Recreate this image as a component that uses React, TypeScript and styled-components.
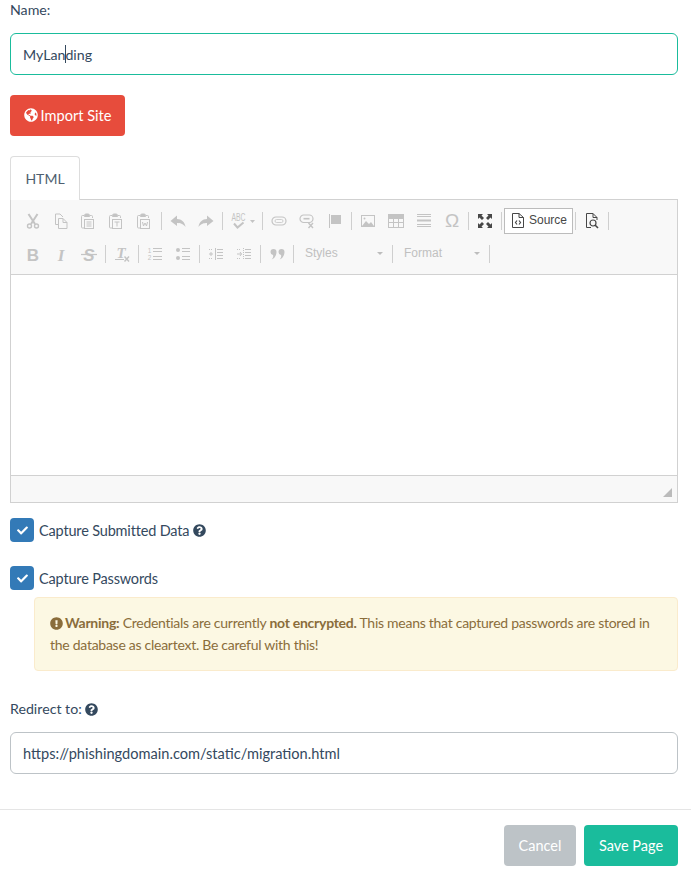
import React from "react";
import styled, { createGlobalStyle } from "styled-components";
import { FaCheck, FaExclamationCircle, FaGlobeAmericas, FaQuestionCircle } from "react-icons/fa";

const Global = createGlobalStyle`
  html, body { margin: 0; padding: 0; background: #fff; }
  body { font-family: Lato, "Open Sans", "Liberation Sans", sans-serif; color: #34495e; }
  * { box-sizing: border-box; }
`;
const Page = styled.div`width: 691px; height: 874px; overflow: hidden; display: flex; flex-direction: column;`;
const Body = styled.div`padding: 0 13px 0 10px; display: flex; flex-direction: column;`;
const Label = styled.div<{ $top?: number }>`
  margin-top: ${(p) => p.$top ?? 0}px; font-size: 14.2px; line-height: 18px; height: 18px; padding-top: 2px; color: #34495e;
  display: flex; align-items: center; gap: 3px;
`;
const Field = styled.div<{ $focus?: boolean; $size: number }>`
  height: 42px; margin-top: 15px; border: 1px solid ${(p) => (p.$focus ? "#1abc9c" : "#bdc3c7")};
  border-radius: 6px; padding: 0 12px; display: flex; align-items: center; font-size: ${(p) => p.$size}px; color: #34495e;
`;
const Caret = styled.span`display: inline-block; width: 1px; height: 18px; background: #34495e; margin: 0 -0.5px;`;
const ImportButton = styled.div`
  margin-top: 20px; width: 115px; height: 41px; border-radius: 4px; background: #e74c3c; color: #fff;
  display: flex; align-items: center; justify-content: center; gap: 3px; font-size: 14.6px; padding-bottom: 1px;
`;
const Tab = styled.div`
  margin-top: 20px; width: 70px; height: 44px; border: 1px solid #ddd; border-bottom: 0; border-radius: 4px 4px 0 0;
  display: flex; align-items: center; justify-content: center; font-size: 14px; color: #4f5f70; background: #fff;
  position: relative; z-index: 1; margin-bottom: -1px;
`;
const Editor = styled.div`border: 1px solid #d1d1d1; height: 304px; display: flex; flex-direction: column;`;
const Toolbar = styled.div`height: 75px; padding: 4px 0 0 8px; background: #f8f8f8; border-bottom: 1px solid #d1d1d1;`;
const ToolRow = styled.div`height: 33px; display: flex; align-items: center;`;
const Slot = styled.span<{ $w?: number; $dark?: boolean }>`
  width: ${(p) => p.$w ?? 28}px; height: 26px; flex: none; display: flex; align-items: center; justify-content: center;
  color: ${(p) => (p.$dark ? "#474747" : "#c4c4c4")};
`;
const Sep = styled.span`width: 1px; height: 18px; margin: 0 2px; flex: none; background: #cfcfcf;`;
const SourceButton = styled.span`
  width: 69px; height: 26px; flex: none; display: flex; align-items: center; gap: 5px; padding: 0 0 1px 7px;
  border: 1px solid #bcbcbc; background: #fff; color: #474747; font: 12px "Liberation Sans", Arial, sans-serif;
`;
const Combo = styled.span<{ $w: number }>`
  width: ${(p) => p.$w}px; height: 26px; flex: none; display: flex; align-items: center; justify-content: space-between;
  padding: 0 7px 2px 9px; color: #c0c0c0; font: 12px "Liberation Sans", Arial, sans-serif;
`;
const ComboArrow = styled.span`width: 0; height: 0; border: 3px solid transparent; border-top-color: #bdbdbd; border-bottom: 0; margin-top: 2px;`;
const Content = styled.div`height: 201px; flex: none; background: #fff; border-bottom: 1px solid #d1d1d1;`;
const EditorFoot = styled.div`flex: 1; background: #f8f8f8; position: relative;`;
const Resizer = styled.svg`position: absolute; right: 4px; bottom: 4px;`;
const CheckRow = styled.div<{ $top: number }>`
  margin-top: ${(p) => p.$top}px; display: flex; align-items: center; gap: 5px; height: 24px; font-size: 14.5px;
  letter-spacing: -0.17px;
`;
const Box = styled.span`width: 24px; height: 24px; border-radius: 4px; background: #337ab7; color: #fff; display: flex; align-items: center; justify-content: center;`;
const Help = styled.span`display: inline-flex; margin-left: -1px;`;
const Alert = styled.div`
  margin: 7px 0 0 24px; height: 74px; padding: 14px 15px; border: 1px solid #faebcc; border-radius: 4px;
  background: #fcf8e3; color: #8a6d3b; font-size: 14px; line-height: 22px; letter-spacing: -0.27px;
`;
const AlertIcon = styled.span`display: inline-flex; vertical-align: -2px; margin-right: 2px;`;
const Divider = styled.div`height: 1px; background: #e5e5e5; margin-top: 35px;`;
const Footer = styled.div`padding: 15px 13px 0 0; display: flex; justify-content: flex-end; gap: 8px;`;
const FootBtn = styled.div<{ $w: number; $bg: string }>`
  width: ${(p) => p.$w}px; height: 41px; border-radius: 4px; background: ${(p) => p.$bg}; color: #fff;
  display: flex; align-items: center; justify-content: center; font-size: 14.5px;
`;
const IconSvg = styled.svg`overflow: visible; flex: none;`;

const I = ({ children, w = 16 }: { children: React.ReactNode; w?: number }) => (
  <IconSvg width={w} height={16} viewBox={`0 0 ${w} 16`} fill="none" stroke="currentColor" strokeWidth={1}>{children}</IconSvg>
);
const ClipBase = () => (
  <>
    <path d="M3 2.5H1.5Q.5 2.5.5 3.5V14Q.5 15 1.5 15H3M11.5 5V3.5Q11.5 2.5 10.5 2.5H9" />
    <path d="M3.5 2.5Q3.5 1 5 1H7Q8.5 1 8.5 2.5V3.5H3.5Z" fill="currentColor" />
    <rect x="3.5" y="6.5" width="9" height="9" />
  </>
);
const T = (p: { x: number; y: number; size: number; text: string; family?: string; weight?: number; italic?: boolean; fit?: number }) => (
  <text x={p.x} y={p.y} fontSize={p.size} fontFamily={p.family ?? "Liberation Sans"} fontWeight={p.weight ?? 400}
    fontStyle={p.italic ? "italic" : "normal"} fill="currentColor" stroke="none" textAnchor="middle"
    textLength={p.fit} lengthAdjust={p.fit ? "spacingAndGlyphs" : undefined}>{p.text}</text>
);
const Comma = ({ dx }: { dx: number }) => (
  <path transform={`translate(${dx} 2)`} d="M.5 4A3 3 0 0 1 6.500 4C6.500 7.500 4.500 10.500 1.500 11.500C3 10 3.500 8.500 3 7A3 3 0 0 1 .5 4Z" fill="currentColor" stroke="none" />
);
const icons = {
  cut: <I><path d="M3.5 1L10 11M12.5 1L6 11" strokeWidth={2} /><circle cx="4.5" cy="13" r="2" strokeWidth={1.4} /><circle cx="11.5" cy="13" r="2" strokeWidth={1.4} /></I>,
  copy: <I><path d="M5.5 11.5H2.500V1H7L10 4" /><path d="M5.5 5.500H10L14 9.500V15.500H5.500Z" /><path d="M10 5.500V9.500H14" /></I>,
  paste: <I><ClipBase /><path d="M5.500 9H10.500M5.500 11H10.500M5.500 13H10.500" /></I>,
  pasteText: <I><ClipBase /><path d="M5.500 9H10.500M8 9V13.500" /></I>,
  pasteWord: <I><ClipBase /><path d="M5.500 9L6.500 13L8 10L9.500 13L10.500 9" /></I>,
  undo: <I><path d="M7 2.500L.5 8L7 13V10C10 10 13 10.500 15.500 14C15 9 11.500 6 7 6Z" fill="currentColor" stroke="none" /></I>,
  redo: <I><path d="M9 2.500L15.500 8L9 13V10C6 10 3 10.500 .5 14C1 9 4.500 6 9 6Z" fill="currentColor" stroke="none" /></I>,
  spell: <I w={24}><T x={7.500} y={8} size={10} text="ABC" fit={14} /><path d="M3 10.500L6.500 14.500L12.500 9.500" strokeWidth={2} /><path d="M19 7H24L21.500 10Z" fill="currentColor" stroke="none" /></I>,
  link: <I><rect x="1" y="4" width="14" height="8" rx="4" strokeWidth={1.2} /><rect x="4" y="6.500" width="8" height="3" rx="1.500" strokeWidth={.8} /></I>,
  unlink: <I><rect x="1" y="2" width="13" height="7.500" rx="3.700" strokeWidth={1.2} /><path d="M4.500 5.700H10.500" strokeWidth={1.600} /><path d="M9.500 10L14 15M14 10L9.500 15" strokeWidth={1.4} /></I>,
  anchor: <I><path d="M2.500 1V15" /><path d="M4 2H14V11H4Z" fill="currentColor" stroke="none" /></I>,
  image: <I><rect x="1.500" y="2.500" width="13" height="11" /><path d="M2 13L6 8L9 11L11 9L14 13Z" fill="currentColor" stroke="none" /><circle cx="4.500" cy="5.500" r="1" fill="currentColor" stroke="none" /></I>,
  table: <I><rect x=".5" y="1.500" width="15" height="13" /><path d="M0 4H16" strokeWidth={4} /><path d="M.5 9.500H15.500M5.500 5V14.500M10.500 5V14.500" /></I>,
  hr: <I><path d="M1 1.500H15M1 3.500H15M1 11.500H15M1 13.500H15" /><path d="M1 7.500H15" strokeWidth={2} /></I>,
  omega: <I><T x={8} y={14} size={19} text="Ω" /></I>,
  maximize: <I><path d="M1 1H6L4.500 2.500L7 5L5 7L2.500 4.500L1 6ZM15 1H10L11.500 2.500L9 5L11 7L13.500 4.500L15 6ZM1 15H6L4.500 13.500L7 11L5 9L2.500 11.500L1 10ZM15 15H10L11.500 13.500L9 11L11 9L13.500 11.500L15 10Z" fill="currentColor" stroke="none" /></I>,
  source: <I w={12}><path d="M.5 1.500H7L11.500 5.500V15.500H.5Z" /><path d="M7 1.500V5.500H11.500" /><path d="M5 8.500L3.500 10.500L5 12.500M7 8.500L8.500 10.500L7 12.500" strokeWidth={1.2} /></I>,
  preview: <I w={12}><path d="M5 14.500H.5V.5H7L11 4.500V7" /><path d="M7 .5V4.500H11" /><circle cx="7" cy="10" r="3" strokeWidth={1.2} /><path d="M9 12L12 15" strokeWidth={1.6} /></I>,
  bold: <I><T x={8} y={14.500} size={17} text="B" weight={700} /></I>,
  italic: <I><T x={8} y={14.500} size={17} text="I" family="Liberation Serif" weight={700} italic /></I>,
  strike: <I><T x={8} y={14.500} size={17} text="S" weight={700} italic /><path d="M0 8.500H16" strokeWidth={1.2} /></I>,
  removeFormat: <I><T x={7} y={12} size={15} text="T" family="Liberation Serif" weight={700} italic /><path d="M1 13.500H10" /><path d="M10.500 10.500L15 15.500M15 10.500L10.500 15.500" strokeWidth={1.4} /></I>,
  numbered: <I><T x={2.500} y={6.500} size={6.500} text="1" /><T x={2.500} y={14} size={6.500} text="2" /><path d="M6 2.500H15M6 5.500H15M6 10.500H15M6 13.500H15" /></I>,
  bulleted: <I><circle cx="3" cy="4" r="2" fill="currentColor" stroke="none" /><circle cx="3" cy="12" r="2" fill="currentColor" stroke="none" /><path d="M7 2.500H15M7 5.500H15M7 10.500H15M7 13.500H15" /></I>,
  outdent: <I><path d="M1 8H5M3 6V10" /><path d="M7.500 2V14" /><path d="M9 3.500H15M9 6.500H15M9 9.500H15M9 12.500H15" /><path d="M1 3.500H5M1 12.500H5" strokeDasharray="1 1" /></I>,
  indent: <I><path d="M1 8H5.500" /><path d="M4 6L5.500 8L4 10" /><path d="M7.500 2V14" strokeDasharray="1 1" /><path d="M9 3.500H15M9 6.500H15M9 9.500H15M9 12.500H15" /><path d="M1 3.500H5M1 12.500H5" strokeDasharray="1 1" /></I>,
  quote: <I><Comma dx={1} /><Comma dx={9} /></I>,
};

export default function App() {
  return (
    <Page>
      <Global />
      <Body>
        <Label>Name:</Label>
        <Field $focus $size={14.2}>MyLan<Caret />ding</Field>
        <ImportButton><FaGlobeAmericas size={14} /> Import Site</ImportButton>
        <Tab>HTML</Tab>
        <Editor>
          <Toolbar>
            <ToolRow>
              <Slot>{icons.cut}</Slot><Slot>{icons.copy}</Slot><Slot>{icons.paste}</Slot><Slot>{icons.pasteText}</Slot><Slot>{icons.pasteWord}</Slot><Sep />
              <Slot>{icons.undo}</Slot><Slot>{icons.redo}</Slot><Sep />
              <Slot $w={35}>{icons.spell}</Slot><Sep />
              <Slot>{icons.link}</Slot><Slot>{icons.unlink}</Slot><Slot>{icons.anchor}</Slot><Sep />
              <Slot>{icons.image}</Slot><Slot>{icons.table}</Slot><Slot>{icons.hr}</Slot><Slot>{icons.omega}</Slot><Sep />
              <Slot $dark>{icons.maximize}</Slot><Sep />
              <SourceButton>{icons.source}Source</SourceButton><Sep />
              <Slot $dark>{icons.preview}</Slot><Sep />
            </ToolRow>
            <ToolRow>
              <Slot>{icons.bold}</Slot><Slot>{icons.italic}</Slot><Slot>{icons.strike}</Slot><Sep />
              <Slot>{icons.removeFormat}</Slot><Sep />
              <Slot>{icons.numbered}</Slot><Slot>{icons.bulleted}</Slot><Sep />
              <Slot>{icons.outdent}</Slot><Slot>{icons.indent}</Slot><Sep />
              <Slot>{icons.quote}</Slot><Sep />
              <Combo $w={94}>Styles<ComboArrow /></Combo><Sep />
              <Combo $w={92}>Format<ComboArrow /></Combo><Sep />
            </ToolRow>
          </Toolbar>
          <Content />
          <EditorFoot>
            <Resizer width="11" height="11" viewBox="0 0 11 11"><path d="M10 1V10H1Z" fill="#bbb" /></Resizer>
          </EditorFoot>
        </Editor>
        <CheckRow $top={15}><Box><FaCheck size={11} /></Box>Capture Submitted Data<Help><FaQuestionCircle size={13} /></Help></CheckRow>
        <CheckRow $top={24}><Box><FaCheck size={11} /></Box>Capture Passwords</CheckRow>
        <Alert>
          <AlertIcon><FaExclamationCircle size={13} /></AlertIcon>
          <strong>Warning:</strong> Credentials are currently <strong>not encrypted.</strong> This means that captured passwords are stored in the database as cleartext. Be careful with this!
        </Alert>
        <Label $top={28}>Redirect to: <FaQuestionCircle size={13} /></Label>
        <Field $size={14.6}>https://phishingdomain.com/static/migration.html</Field>
      </Body>
      <Divider />
      <Footer>
        <FootBtn $w={72} $bg="#bdc3c7">Cancel</FootBtn>
        <FootBtn $w={94} $bg="#1abc9c">Save Page</FootBtn>
      </Footer>
    </Page>
  );
}
